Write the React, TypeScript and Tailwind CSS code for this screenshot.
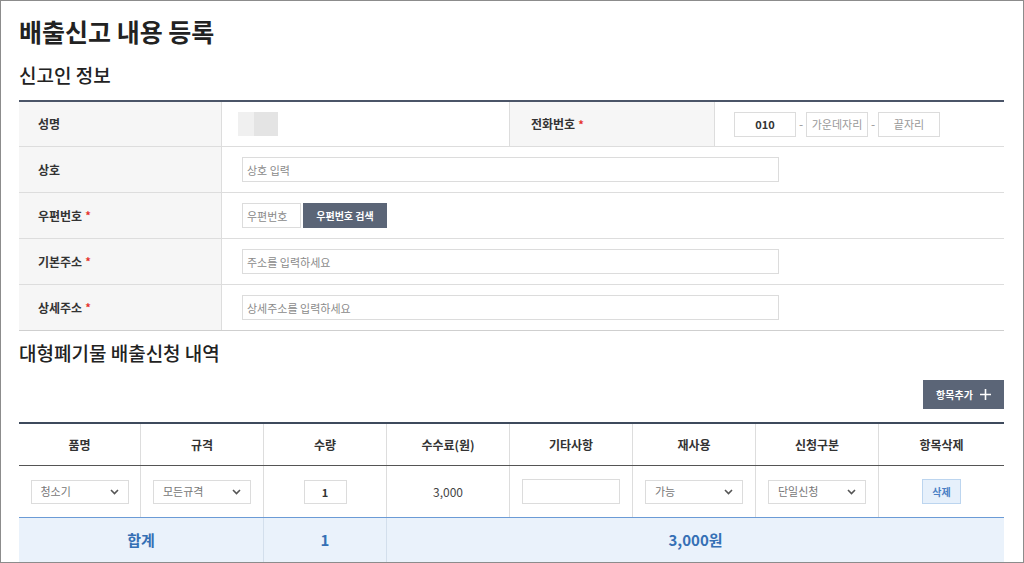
import React from 'react';

const font = { fontFamily: '"Noto Sans CJK KR", "Noto Sans", sans-serif' };

function Req() {
  return <span className="ml-[3px] text-[#e5322d] text-[11px] align-top">*</span>;
}

function Chevron() {
  return (
    <svg width="9" height="6" viewBox="0 0 9 6" className="shrink-0">
      <path d="M1 1l3.5 3.5L8 1" fill="none" stroke="#555" strokeWidth="1.6" />
    </svg>
  );
}

function FakeSelect({ value }: { value: string }) {
  return (
    <div className="w-[98px] h-[24px] border border-[#dcdcdc] bg-white flex items-center justify-between pl-[9px] pr-[9px] text-[11px] text-[#777]">
      <span>{value}</span>
      <Chevron />
    </div>
  );
}

function LabelCell({ children }: { children: React.ReactNode }) {
  return (
    <div className="bg-[#f6f6f6] flex items-center pl-[19px] text-[12px] font-bold text-[#333] border-r border-[#dddddd]">
      {children}
    </div>
  );
}

function TextInput({ placeholder, width }: { placeholder: string; width: string }) {
  return (
    <input
      placeholder={placeholder}
      className={`${width} h-[25px] border border-[#dcdcdc] px-[4px] text-[11px] text-[#333] placeholder:text-[#8a8a8a] outline-none`}
    />
  );
}

export default function App() {
  return (
    <div style={font} className="w-[1024px] h-[563px] overflow-hidden border border-[#8c8c8c] bg-white">
      <div className="pl-[18px] pr-[19px]">
        <h1 className="mt-[14px] h-[32px] leading-[32px] text-[25px] font-bold text-[#222]">배출신고 내용 등록</h1>
        <h2 className="mt-[14px] h-[28px] leading-[28px] text-[19px] font-medium text-[#222]">신고인 정보</h2>

        {/* 신고인 정보 */}
        <div className="mt-[11px] border-t-2 border-[#4b5568]">
          <div className="grid grid-cols-[203px_288px_205px_1fr] h-[45px] border-b border-[#dddddd]">
            <LabelCell>성명</LabelCell>
            <div className="flex items-center pl-[16px] border-r border-[#dddddd]">
              <div className="flex w-[40px] h-[24px]">
                <div className="w-[16px] h-full bg-[#f0f0f0]" />
                <div className="w-[24px] h-full bg-[#e4e4e4]" />
              </div>
            </div>
            <div className="bg-[#f6f6f6] flex items-center pl-[21px] text-[12px] font-bold text-[#333] border-r border-[#dddddd]">
              전화번호
              <Req />
            </div>
            <div className="flex items-center pl-[19px] text-[12px]">
              <input
                defaultValue="010"
                className="w-[62px] h-[25px] border border-[#dcdcdc] text-center text-[11px] font-bold text-[#333] outline-none"
              />
              <span className="w-[10px] text-center text-[#999]">-</span>
              <input
                placeholder="가운데자리"
                className="w-[62px] h-[25px] border border-[#dcdcdc] text-center text-[11px] placeholder:text-[#999] outline-none"
              />
              <span className="w-[10px] text-center text-[#999]">-</span>
              <input
                placeholder="끝자리"
                className="w-[62px] h-[25px] border border-[#dcdcdc] text-center text-[11px] placeholder:text-[#999] outline-none"
              />
            </div>
          </div>

          <div className="grid grid-cols-[203px_1fr] h-[46px] border-b border-[#dddddd]">
            <LabelCell>상호</LabelCell>
            <div className="flex items-center pl-[20px]">
              <TextInput placeholder="상호 입력" width="w-[537px]" />
            </div>
          </div>

          <div className="grid grid-cols-[203px_1fr] h-[46px] border-b border-[#dddddd]">
            <LabelCell>
              우편번호
              <Req />
            </LabelCell>
            <div className="flex items-center pl-[20px] gap-[2px]">
              <TextInput placeholder="우편번호" width="w-[59px]" />
              <button className="w-[84px] h-[25px] bg-[#5b6577] text-white text-[10px] font-bold">우편번호 검색</button>
            </div>
          </div>

          <div className="grid grid-cols-[203px_1fr] h-[46px] border-b border-[#dddddd]">
            <LabelCell>
              기본주소
              <Req />
            </LabelCell>
            <div className="flex items-center pl-[20px]">
              <TextInput placeholder="주소를 입력하세요" width="w-[537px]" />
            </div>
          </div>

          <div className="grid grid-cols-[203px_1fr] h-[46px] border-b border-[#cfcfcf]">
            <LabelCell>
              상세주소
              <Req />
            </LabelCell>
            <div className="flex items-center pl-[20px]">
              <TextInput placeholder="상세주소를 입력하세요" width="w-[537px]" />
            </div>
          </div>
        </div>

        <h2 className="mt-[8px] h-[28px] leading-[28px] text-[19px] font-medium text-[#222]">대형폐기물 배출신청 내역</h2>

        <div className="mt-[13px] flex justify-end">
          <button className="w-[81px] h-[29px] bg-[#5b6577] text-white text-[10px] font-bold flex items-center justify-center gap-[7px]">
            항목추가
            <svg width="11" height="11" viewBox="0 0 11 11">
              <path d="M5.5 0v11M0 5.5h11" stroke="#fff" strokeWidth="1.6" />
            </svg>
          </button>
        </div>

        {/* 배출신청 내역 */}
        <div className="mt-[13px] border-t-2 border-[#3e4a5c]">
          <div className="grid grid-cols-[122px_123px_123px_123px_123px_123px_123px_1fr] h-[42px] border-b border-[#555]">
            {['품명', '규격', '수량', '수수료(원)', '기타사항', '재사용', '신청구분', '항목삭제'].map((h, i) => (
              <div
                key={h}
                className={
                  'flex items-center justify-center text-[12px] font-bold text-[#333] ' +
                  (i < 7 ? 'border-r border-[#dddddd]' : '')
                }
              >
                {h}
              </div>
            ))}
          </div>

          <div className="grid grid-cols-[122px_123px_123px_123px_123px_123px_123px_1fr] h-[51px]">
            <div className="flex items-center justify-center border-r border-[#dddddd]">
              <FakeSelect value="청소기" />
            </div>
            <div className="flex items-center justify-center border-r border-[#dddddd]">
              <FakeSelect value="모든규격" />
            </div>
            <div className="flex items-center justify-center border-r border-[#dddddd]">
              <input
                defaultValue="1"
                className="w-[43px] h-[24px] border border-[#dcdcdc] text-center text-[11px] font-bold text-[#333] outline-none"
              />
            </div>
            <div className="flex items-center justify-center border-r border-[#dddddd] text-[12px] text-[#444]">3,000</div>
            <div className="flex items-center justify-center border-r border-[#dddddd]">
              <input className="w-[98px] h-[25px] border border-[#dcdcdc] outline-none" />
            </div>
            <div className="flex items-center justify-center border-r border-[#dddddd]">
              <FakeSelect value="가능" />
            </div>
            <div className="flex items-center justify-center border-r border-[#dddddd]">
              <FakeSelect value="단일신청" />
            </div>
            <div className="flex items-center justify-center">
              <button className="w-[39px] h-[25px] bg-[#e6f0fb] border border-[#bcd5ef] text-[10px] font-bold text-[#4a7fc4]">
                삭제
              </button>
            </div>
          </div>

          <div className="grid grid-cols-[245px_123px_1fr] h-[46px] border-t border-[#6b9bd6] bg-[#eaf2fb] text-[15px] font-bold text-[#3570b5]">
            <div className="flex items-center justify-center border-r border-[#d3dfec]">합계</div>
            <div className="flex items-center justify-center border-r border-[#d3dfec]">1</div>
            <div className="flex items-center justify-center">3,000원</div>
          </div>
        </div>
      </div>
    </div>
  );
}
